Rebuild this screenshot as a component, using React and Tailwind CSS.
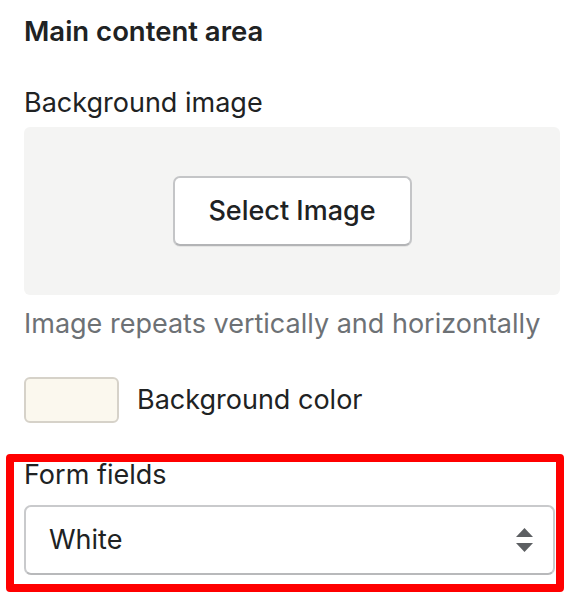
export default function App() {
  return (
    <div
      className="relative w-[564px] h-[596px] bg-white overflow-hidden text-[#202223]"
      style={{ fontFamily: 'Inter, "Noto Sans", sans-serif' }}
    >
      <div className="flex flex-col pl-[24px] pr-[4px] pt-[12px]">
        <h2 className="text-[27.5px] leading-[38px] font-semibold">Main content area</h2>

        <div className="mt-[34px] text-[27px] leading-[38px]">Background image</div>
        <div className="mt-[5px] h-[168px] rounded-[6px] bg-[#f4f4f3] flex items-center justify-center">
          <button className="w-[239px] h-[70px] rounded-[7px] bg-white border-2 border-[#c4c5c7] border-b-[#b3b4b6] text-[27px] font-medium text-[#202223] shadow-[0_1px_0_rgba(0,0,0,0.06)]">
            Select Image
          </button>
        </div>
        <p className="mt-[10px] text-[27px] leading-[38px] text-[#6d7175] whitespace-nowrap">
          Image repeats vertically and horizontally
        </p>

        <div className="mt-[34px] flex items-center gap-[18px]">
          <div className="w-[95px] h-[46px] rounded-[6px] bg-[#fbf8ee] border-2 border-[#d6d2c9]" />
          <span className="text-[27px] leading-[38px]">Background color</span>
        </div>

        <div className="mt-[33px] text-[27px] leading-[38px]">Form fields</div>
        <div className="mt-[11px] w-[531px] h-[70px] rounded-[7px] bg-white border-2 border-[#c9cacc] border-b-[#b8b9bb] flex items-center justify-between pl-[23px] pr-[20px]">
          <span className="text-[27px] leading-[38px]">White</span>
          <svg width="17" height="24" viewBox="0 0 17 24" className="text-[#5c5f62]">
            <path d="M8.5 0 L17 9 L0 9 Z" fill="currentColor" />
            <path d="M0 15 L17 15 L8.5 24 Z" fill="currentColor" />
          </svg>
        </div>
      </div>

      <div className="absolute left-[6px] top-[454px] w-[558px] h-[138px] border-[8px] border-[#ff0000] rounded-[4px] pointer-events-none" />
    </div>
  );
}
